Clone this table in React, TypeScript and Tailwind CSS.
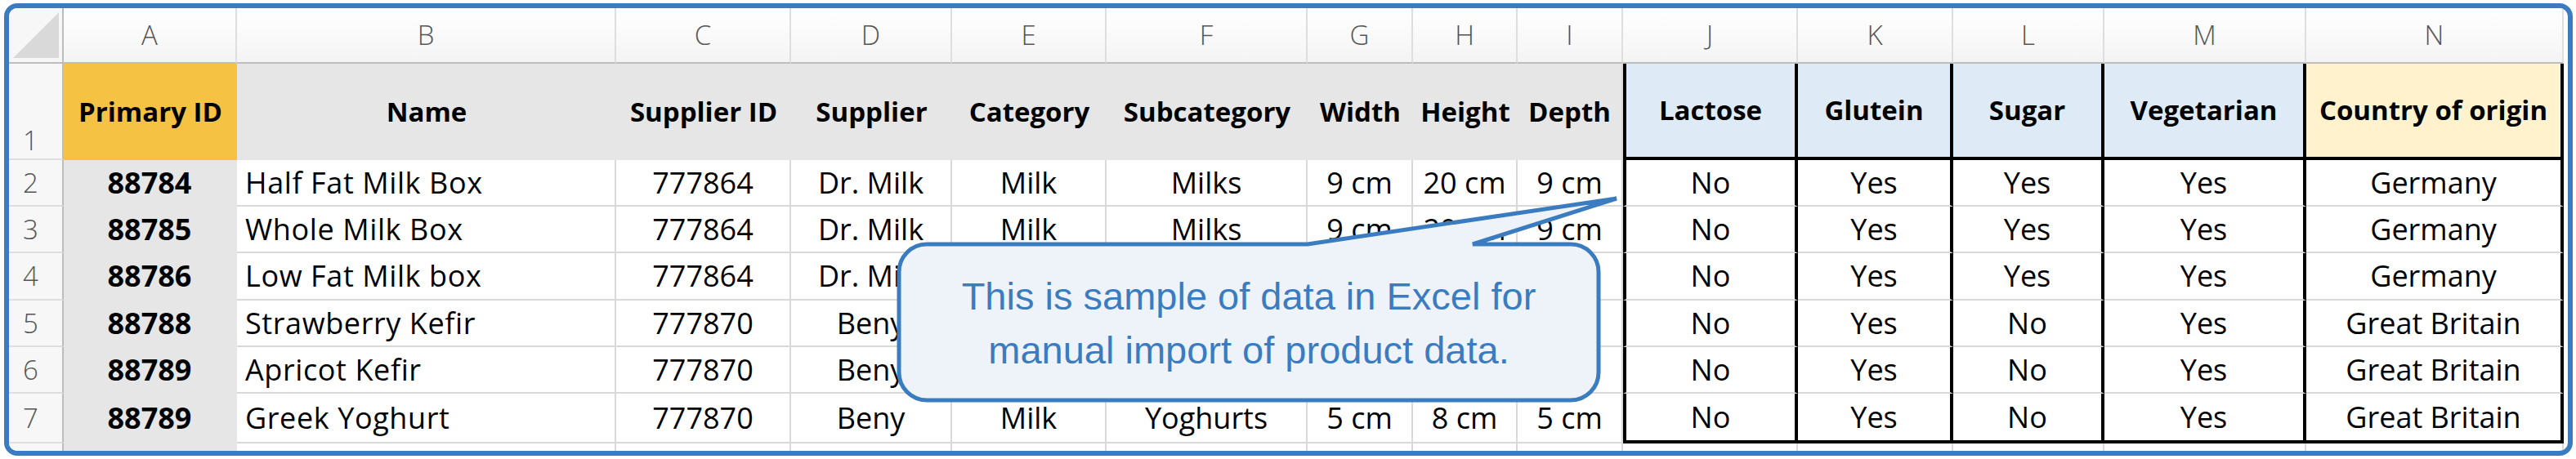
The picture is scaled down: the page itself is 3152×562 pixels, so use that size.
import React from "react";

type Col = {
    letter: string;
    title: string;
    headBg: string;
    left?: boolean;
    flag?: boolean;
};

const cols: Col[] = [
    { letter: "A", title: "Primary ID", headBg: "bg-[#f5c243]" },
    { letter: "B", title: "Name", headBg: "bg-[#e7e6e6]", left: true },
    { letter: "C", title: "Supplier ID", headBg: "bg-[#e7e6e6]" },
    { letter: "D", title: "Supplier", headBg: "bg-[#e7e6e6]" },
    { letter: "E", title: "Category", headBg: "bg-[#e7e6e6]" },
    { letter: "F", title: "Subcategory", headBg: "bg-[#e7e6e6]" },
    { letter: "G", title: "Width", headBg: "bg-[#e7e6e6]" },
    { letter: "H", title: "Height", headBg: "bg-[#e7e6e6]" },
    { letter: "I", title: "Depth", headBg: "bg-[#e7e6e6]" },
    { letter: "J", title: "Lactose", headBg: "bg-[#deebf7]", flag: true },
    { letter: "K", title: "Glutein", headBg: "bg-[#deebf7]", flag: true },
    { letter: "L", title: "Sugar", headBg: "bg-[#deebf7]", flag: true },
    { letter: "M", title: "Vegetarian", headBg: "bg-[#deebf7]", flag: true },
    { letter: "N", title: "Country of origin", headBg: "bg-[#fff2cc]", flag: true },
];

// cells hidden under the callout are left empty
const rows: string[][] = [
    ["88784", "Half Fat Milk Box", "777864", "Dr. Milk", "Milk", "Milks", "9 cm", "20 cm", "9 cm", "No", "Yes", "Yes", "Yes", "Germany"],
    ["88785", "Whole Milk Box", "777864", "Dr. Milk", "Milk", "Milks", "9 cm", "20 cm", "9 cm", "No", "Yes", "Yes", "Yes", "Germany"],
    ["88786", "Low Fat Milk box", "777864", "Dr. Milk", "", "", "", "", "", "No", "Yes", "Yes", "Yes", "Germany"],
    ["88788", "Strawberry Kefir", "777870", "Beny", "", "", "", "", "", "No", "Yes", "No", "Yes", "Great Britain"],
    ["88789", "Apricot Kefir", "777870", "Beny", "", "", "", "", "", "No", "Yes", "No", "Yes", "Great Britain"],
    ["88789", "Greek Yoghurt", "777870", "Beny", "Milk", "Yoghurts", "5 cm", "8 cm", "5 cm", "No", "Yes", "No", "Yes", "Great Britain"],
];

const Callout = () => (
    <>
        <svg className="absolute left-0 top-0 pointer-events-none" width={3152} height={562}>
            <path
                d="M1134 299 L1600 299 L1978 243 L1802 299 L1922 299 A34 34 0 0 1 1956 333 L1956 456 A34 34 0 0 1 1922 490 L1134 490 A34 34 0 0 1 1100 456 L1100 333 A34 34 0 0 1 1134 299 Z"
                fill="#eef3f9"
                stroke="#3b7cc0"
                strokeWidth={5}
                strokeLinejoin="miter"
            />
        </svg>
        <div className="absolute left-[1100px] top-[330px] w-[856px] text-center font-['Liberation_Sans',Arial,sans-serif] text-[47px] leading-[66px] text-[#3b7cc0]">
            This is sample of data in Excel for
            <br />
            manual import of product data.
        </div>
    </>
);

export default function App() {
    return (
        <div className="relative w-[3152px] h-[562px] bg-white overflow-hidden font-['Open_Sans',sans-serif] text-black">
            <div className="ml-[5px] mt-[4px] w-[3143px] h-[554px] border-[6px] border-[#3b7cc0] rounded-[16px] overflow-hidden bg-white">
                <div className="grid grid-cols-[67px_212px_464px_214px_197px_189px_246px_129px_128px_129px_214px_190px_185px_247px_315px] grid-rows-[68px_118px_57px_57px_58px_57px_57px_61px_9px]">
                    {/* corner */}
                    <div className="relative bg-[#f7f7f7] border-r-2 border-b-2 border-[#bdbdbd]">
                        <svg className="absolute left-0 top-0" width={65} height={66}>
                            <polygon points="5,61 61,5 61,61" fill="#d9d9d9" />
                        </svg>
                    </div>
                    {cols.map((c) => (
                        <div
                            key={c.letter}
                            className="flex items-center justify-center bg-gradient-to-b from-white to-[#f4f4f4] border-r-2 border-r-[#dedede] border-b-2 border-b-[#bdbdbd] text-[33px] font-light text-[#555555]"
                        >
                            {c.letter}
                        </div>
                    ))}

                    {/* row 1: titles */}
                    <div className="flex items-end pl-[17px] pb-[6px] bg-[#f7f7f7] border-r-2 border-r-[#bdbdbd] border-b-2 border-b-[#dedede] text-[33px] font-light text-[#555555] leading-none">
                        1
                    </div>
                    {cols.map((c, i) => (
                        <div
                            key={c.title}
                            className={
                                "flex items-center justify-center text-[33px] font-bold whitespace-nowrap " +
                                c.headBg +
                                (c.flag
                                    ? " border-r-4 border-b-4 border-black" + (i === 9 ? " border-l-4" : "")
                                    : i === 8
                                    ? " border-r-2 border-r-[#d9d9d9]"
                                    : "")
                            }
                        >
                            {c.title}
                        </div>
                    ))}

                    {rows.map((r, ri) => (
                        <React.Fragment key={ri}>
                            <div className="flex items-center pl-[17px] bg-[#f7f7f7] border-r-2 border-r-[#bdbdbd] border-b-2 border-b-[#dedede] text-[33px] font-light text-[#555555]">
                                {ri + 2}
                            </div>
                            {r.map((v, ci) => {
                                const c = cols[ci];
                                const last = ri === rows.length - 1;
                                let cls = "flex items-center text-[36px] whitespace-nowrap overflow-hidden ";
                                cls += c.left ? "justify-start pl-[10px] tracking-[0.6px] " : "justify-center ";
                                if (ci === 0) {
                                    cls += "font-bold bg-[#e7e6e6] border-r-2 border-r-[#e7e6e6] border-b-2 border-b-[#e7e6e6]";
                                } else if (c.flag) {
                                    cls += "bg-white border-r-4 border-r-black " + (ci === 9 ? "border-l-4 border-l-black " : "");
                                    cls += last ? "border-b-4 border-b-black" : "border-b-2 border-b-[#d9d9d9]";
                                } else {
                                    cls += "bg-white border-r-2 border-r-[#d9d9d9] border-b-2 border-b-[#d9d9d9]";
                                }
                                return (
                                    <div key={ci} className={cls}>
                                        {v}
                                    </div>
                                );
                            })}
                        </React.Fragment>
                    ))}

                    {/* partial row 8 */}
                    <div className="bg-[#f7f7f7] border-r-2 border-[#bdbdbd]" />
                    {cols.map((c, i) => (
                        <div key={"x" + c.letter} className={i === 0 ? "bg-[#e7e6e6]" : "border-r-2 border-[#d9d9d9]"} />
                    ))}
                </div>
            </div>
            <Callout />
        </div>
    );
}
